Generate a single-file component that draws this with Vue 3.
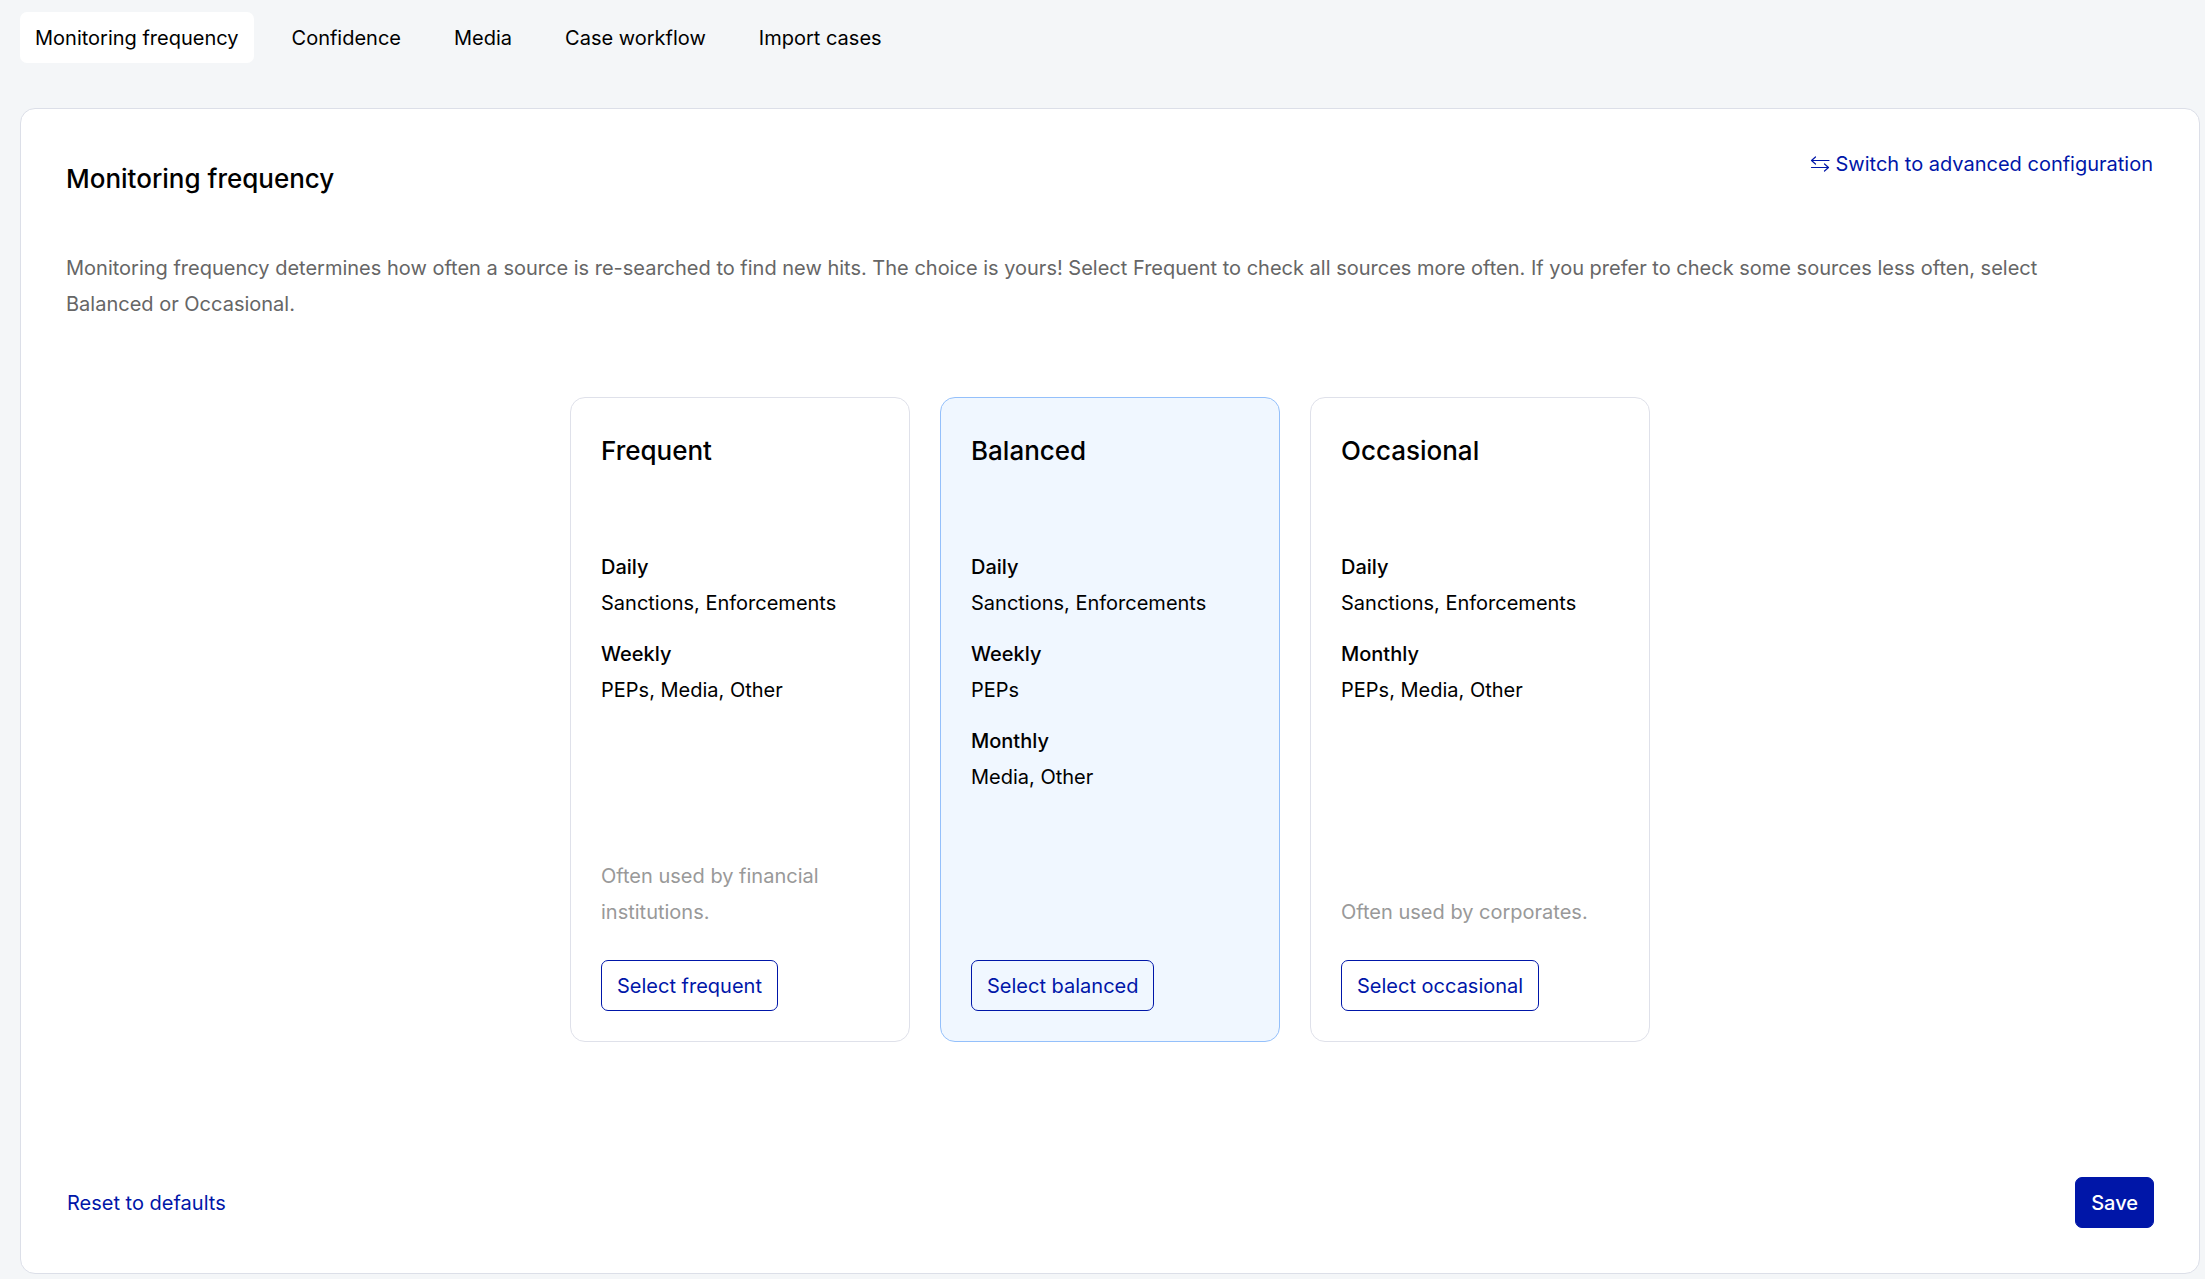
<script setup>
import { ref } from 'vue'

const tabs = ['Monitoring frequency', 'Confidence', 'Media', 'Case workflow', 'Import cases']
const activeTab = ref(tabs[0])

const plans = [
  {
    name: 'Frequent',
    schedule: [
      { period: 'Daily', sources: 'Sanctions, Enforcements' },
      { period: 'Weekly', sources: 'PEPs, Media, Other' },
    ],
    note: 'Often used by financial institutions.',
  },
  {
    name: 'Balanced',
    schedule: [
      { period: 'Daily', sources: 'Sanctions, Enforcements' },
      { period: 'Weekly', sources: 'PEPs' },
      { period: 'Monthly', sources: 'Media, Other' },
    ],
    note: '',
  },
  {
    name: 'Occasional',
    schedule: [
      { period: 'Daily', sources: 'Sanctions, Enforcements' },
      { period: 'Monthly', sources: 'PEPs, Media, Other' },
    ],
    note: 'Often used by corporates.',
  },
]
const selected = ref('Balanced')
</script>

<template>
  <div class="page">
    <nav class="tabs">
      <button
        v-for="tab in tabs"
        :key="tab"
        type="button"
        class="tab"
        :class="{ active: tab === activeTab }"
        @click="activeTab = tab"
      >{{ tab }}</button>
    </nav>

    <main class="panel">
      <header class="panel-header">
        <h1 class="title">Monitoring frequency</h1>
        <a class="switch" href="#advanced">
          <svg class="switch-icon" viewBox="0 0 20 18" aria-hidden="true">
            <path d="M19 5.5H1.5M5.5 2L1.5 5.5L5.5 9M1.5 12.5H18.5M14.5 9L18.5 12.5L14.5 16" />
          </svg>
          <span>Switch to advanced configuration</span>
        </a>
      </header>

      <p class="intro">
        Monitoring frequency determines how often a source is re-searched to find new hits. The choice is yours!
        Select Frequent to check all sources more often. If you prefer to check some sources less often, select
        Balanced or Occasional.
      </p>

      <div class="plans">
        <section
          v-for="plan in plans"
          :key="plan.name"
          class="plan"
          :class="{ selected: plan.name === selected }"
        >
          <h2 class="title plan-title">{{ plan.name }}</h2>
          <dl class="schedule">
            <div v-for="entry in plan.schedule" :key="entry.period">
              <dt>{{ entry.period }}</dt>
              <dd>{{ entry.sources }}</dd>
            </div>
          </dl>
          <p class="note">{{ plan.note }}</p>
          <button type="button" class="button outline" @click="selected = plan.name">
            Select {{ plan.name.toLowerCase() }}
          </button>
        </section>
      </div>

      <footer class="panel-footer">
        <button type="button" class="reset" @click="selected = 'Balanced'">Reset to defaults</button>
        <button type="button" class="button primary">Save</button>
      </footer>
    </main>
  </div>
</template>

<style>
body {
  background: #f4f6f8;
}
</style>

<style scoped>
.page {
  padding: 12px 5px 5px 20px;
  font-family: Inter, "Liberation Sans", sans-serif;
  font-size: 20px;
  line-height: 36px;
  color: #000;
}

button {
  margin: 0;
  font: inherit;
  color: inherit;
  cursor: pointer;
}

.tabs {
  display: flex;
  gap: 23px;
  margin-bottom: 45px;
}

.tab {
  height: 51px;
  padding: 0 15px;
  border: 0;
  border-radius: 7px;
  background: transparent;
}

.tab.active {
  background: #fff;
}

.panel {
  padding: 30px 45px 45px;
  border: 1px solid #dcdfe8;
  border-radius: 15px;
  background: #fff;
}

.panel-header {
  display: flex;
  justify-content: space-between;
  align-items: flex-start;
}

.title {
  margin: 0;
  font-size: 26px;
  font-weight: 500;
  line-height: 80px;
}

.switch {
  display: flex;
  align-items: center;
  gap: 6px;
  padding: 0 1px;
  line-height: 50px;
  color: #0016a8;
  text-decoration: none;
}

.switch-icon {
  width: 20px;
  height: 18px;
  fill: none;
  stroke: currentColor;
  stroke-width: 1.2;
  stroke-linecap: round;
  stroke-linejoin: round;
}

.intro {
  margin: 31px 0 75px;
  padding-right: 45px;
  color: #666;
}

.plans {
  display: grid;
  grid-template-columns: repeat(3, 340px);
  justify-content: center;
  gap: 30px;
}

.plan {
  display: flex;
  flex-direction: column;
  align-items: flex-start;
  padding: 30px;
  border: 1px solid #dfe1ea;
  border-radius: 15px;
}

.plan.selected {
  border-color: #94c0fb;
  background: #f0f7ff;
}

.plan-title {
  line-height: 46px;
}

.schedule {
  display: flex;
  flex-direction: column;
  gap: 15px;
  min-height: 309px;
  margin: 75px 0 0;
}

.schedule dt {
  font-weight: 500;
}

.schedule dd {
  margin: 0;
}

.note {
  display: flex;
  align-items: flex-end;
  min-height: 72px;
  margin: 0 0 30px;
  color: #999;
}

.button {
  height: 51px;
  padding: 0 15px;
  border: 1px solid #0016a8;
  border-radius: 7px;
}

.outline {
  background: transparent;
  color: #0016a8;
}

.primary {
  background: #0016a8;
  color: #fff;
  font-weight: 500;
}

.panel-footer {
  display: flex;
  justify-content: space-between;
  align-items: center;
  margin-top: 135px;
}

.reset {
  padding: 0 1px;
  border: 0;
  background: transparent;
  color: #0016a8;
}
</style>
